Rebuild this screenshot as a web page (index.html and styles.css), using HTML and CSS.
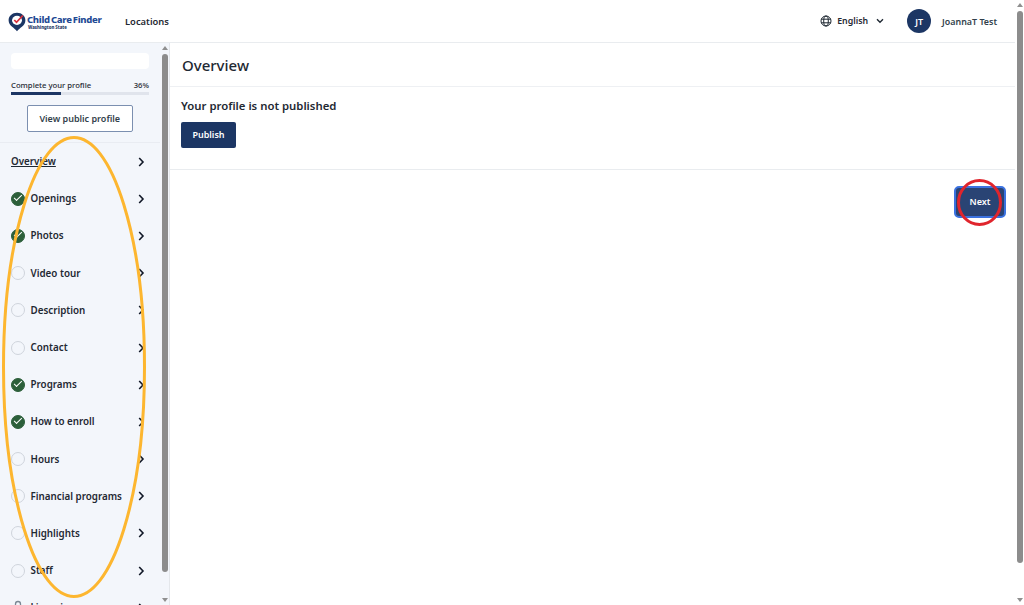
FILE: index.html
```html
<!DOCTYPE html>
<html lang="en">
<head>
    <meta charset="UTF-8">
    <title>Child Care Finder</title>
    <link rel="stylesheet" href="styles.css">
</head>
<body>
    <div class="page">
        <header class="topbar">
            <a class="logo">
                <svg class="logo-pin" width="18" height="20" viewBox="0 0 18 22" preserveAspectRatio="none">
                    <path d="M9 .8C4.300.8.600 4.500.600 9.100c0 3 1.500 5.300 3.500 7.100 1.800 1.600 3.600 3 4.900 5 1.300-2 3.100-3.400 4.900-5 2-1.800 3.500-4.100 3.500-7.100C17.400 4.500 13.700.8 9 .8z" fill="#1c3664"/>
                    <circle cx="9" cy="9.200" r="5" fill="#fff"/>
                    <path d="M6.300 8.800l2.200 2.600L14.800 3.800" fill="none" stroke="#d8303c" stroke-width="1.700"/>
                </svg>
                <span class="logo-text">
                    <span class="logo-name">Child Care Finder</span>
                    <span class="logo-sub">Washington State</span>
                </span>
            </a>
            <a class="top-link">Locations</a>
            <div class="top-right">
                <svg class="globe" width="12" height="12" viewBox="0 0 12 12" fill="none" stroke="#1f2933" stroke-width="1">
                    <circle cx="6" cy="6" r="5"/>
                    <ellipse cx="6" cy="6" rx="2.300" ry="5"/>
                    <path d="M1.200 4.200h9.600M1.200 7.800h9.600"/>
                </svg>
                <span class="lang">English</span>
                <svg class="caret" width="8" height="6" viewBox="0 0 8 6" fill="none" stroke="#1f2933" stroke-width="1.400">
                    <path d="M1 1.200l3 3 3-3"/>
                </svg>
                <span class="avatar">JT</span>
                <span class="user">JoannaT Test</span>
            </div>
        </header>
        <div class="content">
            <aside class="sidebar">
                <div class="side-inner">
                    <div class="blank-name"></div>
                    <div class="progress-label"><span>Complete your profile</span><span>36%</span></div>
                    <div class="progress"><div class="progress-fill" style="width:36%"></div></div>
                    <a class="btn-outline">View public profile</a>
                    <ul class="nav">
                        <li class="nav-item"><span class="nav-text active">Overview</span><svg class="chev" width="7" height="10" viewBox="0 0 7 10"><path d="M1.200 1l3.800 4-3.800 4" fill="none" stroke="#111827" stroke-width="1.600"/></svg></li>
                        <li class="nav-item"><span class="tick done"></span><span class="nav-text">Openings</span><svg class="chev" width="7" height="10" viewBox="0 0 7 10"><path d="M1.200 1l3.800 4-3.800 4" fill="none" stroke="#111827" stroke-width="1.600"/></svg></li>
                        <li class="nav-item"><span class="tick done"></span><span class="nav-text">Photos</span><svg class="chev" width="7" height="10" viewBox="0 0 7 10"><path d="M1.200 1l3.800 4-3.800 4" fill="none" stroke="#111827" stroke-width="1.600"/></svg></li>
                        <li class="nav-item"><span class="tick"></span><span class="nav-text">Video tour</span><svg class="chev" width="7" height="10" viewBox="0 0 7 10"><path d="M1.200 1l3.800 4-3.800 4" fill="none" stroke="#111827" stroke-width="1.600"/></svg></li>
                        <li class="nav-item"><span class="tick"></span><span class="nav-text">Description</span><svg class="chev" width="7" height="10" viewBox="0 0 7 10"><path d="M1.200 1l3.800 4-3.800 4" fill="none" stroke="#111827" stroke-width="1.600"/></svg></li>
                        <li class="nav-item"><span class="tick"></span><span class="nav-text">Contact</span><svg class="chev" width="7" height="10" viewBox="0 0 7 10"><path d="M1.200 1l3.800 4-3.800 4" fill="none" stroke="#111827" stroke-width="1.600"/></svg></li>
                        <li class="nav-item"><span class="tick done"></span><span class="nav-text">Programs</span><svg class="chev" width="7" height="10" viewBox="0 0 7 10"><path d="M1.200 1l3.800 4-3.800 4" fill="none" stroke="#111827" stroke-width="1.600"/></svg></li>
                        <li class="nav-item"><span class="tick done"></span><span class="nav-text">How to enroll</span><svg class="chev" width="7" height="10" viewBox="0 0 7 10"><path d="M1.200 1l3.800 4-3.800 4" fill="none" stroke="#111827" stroke-width="1.600"/></svg></li>
                        <li class="nav-item"><span class="tick"></span><span class="nav-text">Hours</span><svg class="chev" width="7" height="10" viewBox="0 0 7 10"><path d="M1.200 1l3.800 4-3.800 4" fill="none" stroke="#111827" stroke-width="1.600"/></svg></li>
                        <li class="nav-item"><span class="tick"></span><span class="nav-text">Financial programs</span><svg class="chev" width="7" height="10" viewBox="0 0 7 10"><path d="M1.200 1l3.800 4-3.800 4" fill="none" stroke="#111827" stroke-width="1.600"/></svg></li>
                        <li class="nav-item"><span class="tick"></span><span class="nav-text">Highlights</span><svg class="chev" width="7" height="10" viewBox="0 0 7 10"><path d="M1.200 1l3.800 4-3.800 4" fill="none" stroke="#111827" stroke-width="1.600"/></svg></li>
                        <li class="nav-item"><span class="tick"></span><span class="nav-text">Staff</span><svg class="chev" width="7" height="10" viewBox="0 0 7 10"><path d="M1.200 1l3.800 4-3.800 4" fill="none" stroke="#111827" stroke-width="1.600"/></svg></li>
                        <li class="nav-item"><svg class="lock" width="14" height="14" viewBox="0 0 14 14"><path d="M4.500 7V5a2.500 2.500 0 0 1 5 0v2" fill="none" stroke="#7b8794" stroke-width="1.300"/><rect x="3" y="7" width="8" height="6" rx="1" fill="#7b8794"/></svg><span class="nav-text">Licensing</span><svg class="chev" width="7" height="10" viewBox="0 0 7 10"><path d="M1.200 1l3.800 4-3.800 4" fill="none" stroke="#111827" stroke-width="1.600"/></svg></li>
                    </ul>
                </div>
                <div class="scroll side-scroll">
                    <span class="arrow-up"></span>
                    <span class="thumb side-thumb"></span>
                    <span class="arrow-down"></span>
                </div>
            </aside>
            <main class="main">
                <h1 class="title">Overview</h1>
                <section class="publish">
                    <h2 class="publish-head">Your profile is not published</h2>
                    <a class="btn">Publish</a>
                </section>
                <div class="next-row">
                    <a class="btn btn-next">Next</a>
                </div>
            </main>
        </div>
    </div>
    <div class="scroll page-scroll">
        <span class="arrow-up"></span>
        <span class="thumb page-thumb"></span>
        <span class="arrow-down"></span>
    </div>
    <svg class="marks" width="1024" height="605" viewBox="0 0 1024 605" fill="none">
        <ellipse cx="74" cy="367" rx="70.500" ry="229.500" stroke="#fdb62f" stroke-width="3"/>
        <ellipse cx="979.500" cy="202.500" rx="21" ry="22" stroke="#e0252d" stroke-width="3"/>
    </svg>
</body>
</html>
```

FILE: styles.css
```css
* { margin: 0; padding: 0; box-sizing: border-box; }
html, body { height: 100%; overflow: hidden; }
body { display: flex; width: 1024px; height: 605px; background: #fff; color: #1f2933; font-family: "Noto Sans", "Open Sans", sans-serif; }
ul { list-style: none; }

.page { flex: 1; min-width: 0; display: flex; flex-direction: column; }

.topbar { height: 43px; flex: none; display: flex; align-items: center; padding: 0 18px 0 8px; border-bottom: 1px solid #e9ecef; }
.logo { display: flex; align-items: center; width: 117px; }
.logo-pin { flex: none; margin-right: 1px; margin-top: 1px; }
.logo-text { display: flex; flex-direction: column; margin-top: 1px; }
.logo-name { font-size: 9.500px; line-height: 11px; font-weight: 800; color: #1f4a94; letter-spacing: -.3px; word-spacing: -1px; white-space: nowrap; }
.logo-sub { font-size: 4.300px; line-height: 5px; font-weight: 800; color: #1c3664; margin-left: 1px; white-space: nowrap; }
.top-link { font-size: 9.400px; font-weight: 600; color: #1f2933; }
.top-right { margin-left: auto; display: flex; align-items: center; }
.globe { margin-right: 5px; }
.lang { font-size: 8.800px; font-weight: 600; margin-right: 8px; }
.caret { margin-right: 23px; }
.avatar { width: 24px; height: 24px; border-radius: 50%; background: #1c3664; color: #fff; font-size: 9px; font-weight: 600; display: flex; align-items: center; justify-content: center; margin-right: 11px; }
.user { font-size: 8.900px; font-weight: 600; color: #323f4b; }

.content { flex: 1; min-height: 0; display: flex; }

.sidebar { width: 170px; flex: none; display: flex; background: #f3f6fb; border-right: 1px solid #e4e7eb; overflow: hidden; }
.side-inner { width: 160px; flex: none; padding-top: 10px; }
.blank-name { height: 16px; margin: 0 11px; background: #fff; border-radius: 4px; }
.progress-label { display: flex; justify-content: space-between; margin: 11px 11px 0; font-size: 7.700px; font-weight: 500; line-height: 11px; color: #1f2933; }
.progress { height: 3px; margin: 1px 11px 0; background: #e0e4ec; }
.progress-fill { height: 3px; background: #1c3664; }
.btn-outline { display: block; height: 27px; margin: 10px 27px 0 26.500px; background: #fff; border: 1px solid #7b8fb0; border-radius: 2px; font-size: 9px; font-weight: 600; line-height: 25px; text-align: center; color: #323f4b; }

.nav { margin-top: 10px; border-top: 1px solid #e9ecf2; }
.nav-item { height: 37.200px; display: flex; align-items: center; padding: 0 15px 0 11px; font-size: 9.800px; font-weight: 600; color: #1f2933; }
.nav-text { white-space: nowrap; }
.nav-text.active { text-decoration: underline; }
.chev { margin-left: auto; flex: none; }
.tick { width: 14px; height: 14px; flex: none; margin-right: 5.500px; border: 1.500px solid #cfd4dc; border-radius: 50%; position: relative; }
.tick.done { background: #2c5f3a; border-color: #2c5f3a; }
.tick.done::after { content: ""; position: absolute; left: 2px; top: 2.500px; width: 6.500px; height: 3px; border-left: 1.800px solid #fff; border-bottom: 1.800px solid #fff; transform: rotate(-45deg); }
.lock { flex: none; margin: -3px 5.500px 0 0; }

.main { flex: 1; min-width: 0; background: #fff; }
.title { height: 44px; padding: 0 12px; font-size: 15px; font-weight: 500; line-height: 44px; color: #1f2933; border-bottom: 1px solid #eef0f3; }
.publish { height: 83px; padding: 11px 11px 0; border-bottom: 1px solid #e9ecef; }
.publish-head { font-size: 11.350px; font-weight: 600; line-height: 16px; color: #1f2933; margin-bottom: 7px; }
.btn { display: inline-block; height: 26px; width: 55px; text-align: center; background: #1c3664; border-radius: 2px; color: #fff; font-size: 9px; font-weight: 600; line-height: 26px; }
.next-row { display: flex; justify-content: flex-end; padding: 16px 9px 0 0; }
.btn-next { width: 52px; height: 32px; line-height: 28px; background: #2a4474; border: 2px solid #3b72e0; border-radius: 5px; }

.scroll { flex: none; display: flex; flex-direction: column; align-items: center; }
.side-scroll { width: 9px; background: #f3f6fb; }
.page-scroll { width: 9px; background: #fff; height: 605px; }
.arrow-up { width: 0; height: 0; margin-top: 3px; border: 3.500px solid transparent; border-top: 0; border-bottom: 4px solid #8f8f8f; }
.arrow-down { width: 0; height: 0; margin-top: auto; margin-bottom: 3px; border: 3.500px solid transparent; border-bottom: 0; border-top: 4px solid #8f8f8f; }
.thumb { width: 6px; border-radius: 3px; background: #8c8c8c; margin-top: 4px; }
.side-thumb { height: 518px; }
.page-thumb { height: 552px; }

.marks { position: absolute; left: 0; top: 0; pointer-events: none; }
```
